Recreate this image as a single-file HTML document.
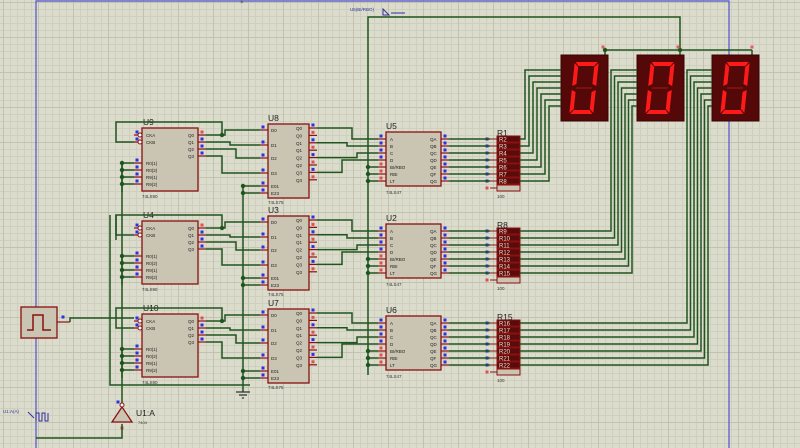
<!DOCTYPE html>
<html><head><meta charset="utf-8"><style>
html,body{margin:0;padding:0;width:800px;height:448px;overflow:hidden;background:#dcdccd;}
#bg{position:absolute;left:0;top:0;width:800px;height:448px;
background-image:
linear-gradient(to right,#c2c2b1 1px,transparent 1px),
linear-gradient(to bottom,#c2c2b1 1px,transparent 1px),
linear-gradient(to right,#cfcfbf 1px,transparent 1px),
linear-gradient(to bottom,#cfcfbf 1px,transparent 1px);
background-size:35px 35px,35px 35px,7px 7px,7px 7px;background-position:3px 2px;}
svg{position:absolute;left:0;top:0;}
text{font-family:"Liberation Sans",sans-serif;}
</style></head><body><div id="bg"></div>
<svg id="s" width="800" height="448" viewBox="0 0 800 448"></svg>
<script>
var o='';
var W='#1e551e',R='#8b1010';
function L(pts,c,w){o+='<polyline points="'+pts.map(p=>p.join(',')).join(' ')+'" fill="none" stroke="'+(c||W)+'" stroke-width="'+(w||1.5)+'"/>';}
function T(x,y,t,s,c,a){o+='<text x="'+x+'" y="'+y+'" font-size="'+s+'" fill="'+(c||'#222')+'"'+(a?' text-anchor="'+a+'"':'')+'>'+t+'</text>';}
function dot(x,y){o+='<circle cx="'+x+'" cy="'+y+'" r="2.2" fill="'+W+'"/>';}
function sq(x,y,c){o+='<rect x="'+(x-1.5)+'" y="'+(y-1.5)+'" width="3" height="3" fill="'+c+'"/>';}
function box(x,y,w,h){o+='<rect x="'+x+'" y="'+y+'" width="'+w+'" height="'+h+'" fill="#c9c5b2" stroke="'+R+'" stroke-width="1.3"/>';}
L([[36,448],[36,1],[729,1],[729,448]],'#5050d0',1.2);
T(240,4,'×',6,'#333');
L([[368,375],[368,17],[680,17],[680,50]]);
L([[605,50],[752,50]]);L([[605,50],[605,55]]);L([[680,50],[680,55]]);L([[752,50],[752,55]]);
dot(605,50);dot(680,50);
sq(603,47,'#e06060');sq(678,47,'#e06060');sq(752,47,'#e06060');
T(350,11,'U5(BI/RBO)',4.5,'#3030a0');
o+='<path d="M383,9 l6,6 l-6,0 z" fill="none" stroke="#3030a0"/>';L([[391,13],[405,13]],'#3030a0',1);
function counter(y,n){
 var x=142;box(x,y,56,63);T(x+1,y-3,n,8.5,'#222');T(x,y+70,'74LS90',4.5,'#333');
 var lp=[['CKA',7],['CKB',14],['R0(1)',35],['R0(2)',42],['R9(1)',49],['R9(2)',56]];
 lp.forEach(p=>{L([[x-8,y+p[1]],[x,y+p[1]]],R,1.2);T(x+4,y+p[1]+2,p[0],4.5);sq(x-5,y+p[1]-3,'#3030e0');});
 ['Q0','Q1','Q2','Q3'].forEach((q,i)=>{var yy=y+7+7*i;L([[x+56,yy],[x+64,yy]],R,1.2);T(x+46,yy+2,q,4.5);sq(x+60,yy-3,i?'#3030e0':'#e05050');});
 o+='<circle cx="'+(x-2)+'" cy="'+(y+7)+'" r="2" fill="#fff" stroke="'+R+'"/><circle cx="'+(x-2)+'" cy="'+(y+14)+'" r="2" fill="#fff" stroke="'+R+'"/>';
 L([[x-8,y+14],[x-26,y+14],[x-26,y-6],[x+80,y-6],[x+80,y+7]]);dot(x+80,y+7);
 [35,42,49,56].forEach(d=>{L([[x-20,y+d],[x-8,y+d]]);dot(x-20,y+d);});
 L([[x-20,y+35],[x-20,y+64]]);
}
function latch(y,n){
 var x=268;box(x,y,41,74);T(x,y-3,n,8.5,'#222');T(x,y+80,'74LS75',4.5,'#333');
 [['D0',6],['D1',21],['D2',34],['D3',49],['E01',62],['E23',69]].forEach(p=>{L([[x-8,y+p[1]],[x,y+p[1]]],R,1.2);T(x+3,y+p[1]+2,p[0],4.5);sq(x-5,y+p[1]-3,'#3030e0');});
 for(var i=0;i<8;i++){var yy=y+4+7.4*i;L([[x+41,yy],[x+49,yy]],R,1.2);T(x+28,yy+2,'Q'+(i>>1),4.5);sq(x+45,yy-3,i%2?'#e05050':'#3030e0');}
 dot(243,y+62);dot(243,y+69);L([[243,y+62],[260,y+62]]);L([[243,y+69],[260,y+69]]);
}
function dec(y,n){
 var x=386;box(x,y,55,54);T(x,y-3,n,8.5,'#222');T(x,y+62,'74LS47',4.5,'#333');
 ['A','B','C','D','BI/RBO','RBI','LT'].forEach((p,i)=>{var yy=y+7+7*i;L([[x-8,yy],[x,yy]],R,1.2);T(x+4,yy+2,p,4.5);sq(x-5,yy-3,i<4?'#3030e0':'#e05050');});
 ['QA','QB','QC','QD','QE','QF','QG'].forEach((p,i)=>{var yy=y+7+7*i;L([[x+55,yy],[x+63,yy]],R,1.2);T(x+44,yy+2,p,4.5);sq(x+59,yy-3,'#3030e0');});
 [4,5,6].forEach(i=>{dot(368,y+7+7*i);L([[368,y+7+7*i],[378,y+7+7*i]]);});
}
function res(y,n,s){
 var x=497;T(x,y-3,n,8.5,'#222');T(x,y+59,'100',4.5,'#333');
 for(var i=0;i<8;i++){o+='<rect x="'+x+'" y="'+(y+7*i-3)+'" width="23" height="6" fill="'+(i<7?'#5a0c0c':'#c9c5b2')+'" stroke="'+R+'" stroke-width="1"/>';
  if(i<7)T(x+2,y+7*i+2.5,'R'+(s+i),6,'#e8e0d0');
  L([[x-7,y+7*i],[x,y+7*i]],R,1);sq(x-10,y+7*i,i<7?'#3030e0':'#e05050');}
}
var CY=[128,221,314],LY=[124,216,309],DY=[132,224,316],NM=[['U9','U8','U5','R1',2],['U4','U3','U2','R8',9],['U10','U7','U6','R15',16]];
var RY=DY.map(v=>v+7);
for(var k=0;k<3;k++){
 counter(CY[k],NM[k][0]);latch(LY[k],NM[k][1]);dec(DY[k],NM[k][2]);res(RY[k],NM[k][3],NM[k][4]);
 var ld=[6,21,34,49],xs=[225,230,236,222];
 for(var i=0;i<4;i++){var y1=CY[k]+7+7*i,y2=LY[k]+ld[i];L([[206,y1],[xs[i],y1],[xs[i],y2],[260,y2]]);}
 var xm=[352,347,357,342];
 for(var i=0;i<4;i++){var y1=LY[k]+4+14.8*i,y2=DY[k]+7+7*i;L([[317,y1],[xm[i],y1],[xm[i],y2],[378,y2]]);}
 for(var i=0;i<7;i++){var yy=DY[k]+7+7*i;L([[449,yy],[490,yy]]);}
}
L([[243,186],[243,392]]);
o+='<path d="M236,392h14M239,395h8M242,398h2" stroke="#333" stroke-width="1.2"/>';
L([[110,215],[110,385],[250,385]]);L([[122,165],[122,405]]);L([[116,215],[116,240]]);
o+='<rect x="21" y="307" width="36" height="31" fill="#c9c5b2" stroke="'+R+'" stroke-width="1.3"/>';
L([[27,330],[33,330],[33,315],[43,315],[43,330],[51,330]],R,1.5);
sq(63,317,'#3030e0');L([[57,322],[70,322]],R,1.2);L([[70,322],[70,318],[134,318]]);
o+='<path d="M112,422 L122,407 L132,422 Z" fill="#c9c5b2" stroke="'+R+'" stroke-width="1.3"/>';
o+='<circle cx="122" cy="405" r="2" fill="#fff" stroke="'+R+'"/>';
T(136,416,'U1:A',8.5,'#222');T(138,424,'7404',4,'#333');sq(118,402,'#3030e0');sq(122,428,'#e05050');
L([[36,438],[122,438],[122,424]]);
T(3,413,'U1:A(A)',4.5,'#3030a0');
o+='<path d="M28,412 l6,6" stroke="#3030a0"/><path d="M36,421 v-8 h3 v8 h3 v-8 h3 v8 h3 v-8" fill="none" stroke="#3030a0"/>';
function disp(x){
 o+='<rect x="'+x+'" y="55" width="47" height="66" fill="#540808" stroke="#3a0404"/>';
 var g='#ff1a1a';
 o+='<g transform="translate('+(x+24)+',88) skewX(-6)">';
 o+='<path d="M-12,-26h22l-3,4h-16z" fill="'+g+'"/>';
 o+='<path d="M-13,-25l4,4v17l-4,2z" fill="'+g+'"/><path d="M11,-25l-4,4v17l4,2z" fill="'+g+'"/>';
 o+='<path d="M-13,2l4,2v17l-4,4z" fill="'+g+'"/><path d="M11,2l-4,2v17l4,4z" fill="'+g+'"/>';
 o+='<path d="M-12,26h22l-3,-4h-16z" fill="'+g+'"/>';
 o+='<path d="M-9,-1h16v2h-16z" fill="#7a1010"/></g>';
}
disp(561);disp(637);disp(712);
for(var i=0;i<7;i++){var yd=70+6*i;
 var x1=525+4*i;L([[520,RY[0]+7*i],[x1,RY[0]+7*i],[x1,yd],[561,yd]]);
 var x2=611+3.5*i;L([[520,RY[1]+7*i],[x2,RY[1]+7*i],[x2,yd],[637,yd]]);
 var x3=687+3.5*i;L([[520,RY[2]+7*i],[x3,RY[2]+7*i],[x3,yd],[712,yd]]);
}
document.getElementById('s').innerHTML=o;
</script>
</body></html>
